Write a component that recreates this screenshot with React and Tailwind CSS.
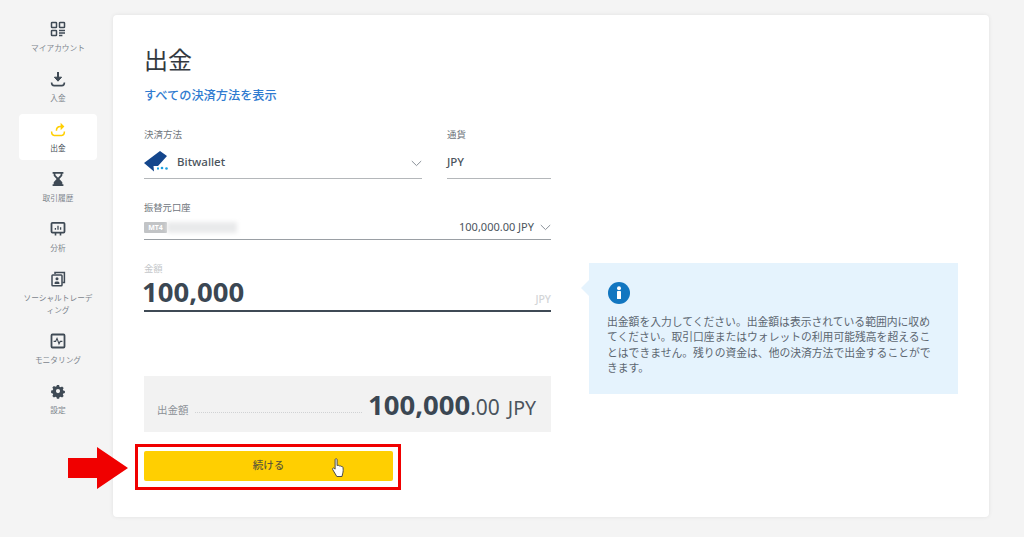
const font = "font-['Noto_Sans','Noto_Sans_CJK_JP',sans-serif]";

function NavIcon({ name, className }) {
  const common = { width: 18, height: 18, viewBox: "0 0 18 18", className };
  if (name === "account")
    return (
      <svg {...common} fill="none" stroke="currentColor" strokeWidth="1.5">
        <rect x="2.5" y="2.5" width="5" height="5" rx="0.6" />
        <rect x="2.5" y="10.5" width="5" height="5" rx="0.6" />
        <rect x="10.5" y="2.5" width="5" height="5" rx="0.6" />
        <path d="M10 10.5h6M10 13h6M10 15.500h3.400" />
      </svg>
    );
  if (name === "deposit")
    return (
      <svg {...common} fill="none" stroke="currentColor" strokeWidth="1.6">
        <path d="M9 2v8.500" strokeWidth="2" />
        <path d="M5.400 7.200h7.200L9 11.200z" fill="currentColor" strokeWidth="1" />
        <path d="M2.600 12.400c0 2.400 1 3.200 2.600 3.200h7.600c1.600 0 2.600-.8 2.600-3.200" />
      </svg>
    );
  if (name === "withdraw")
    return (
      <svg {...common} fill="none" stroke="currentColor" strokeWidth="1.5">
        <path d="M7.400 10.800c0-2.700 1.300-4.300 4-4.300h1" />
        <path d="M11.600 2.800 15.400 6.500l-3.800 3.700z" fill="currentColor" stroke="none" />
        <path d="M2.600 11.600c0 2.800 1 3.800 2.600 3.800h7.600c1.600 0 2.600-1 2.600-3.800" />
      </svg>
    );
  if (name === "history")
    return (
      <svg {...common}>
        <path d="M3.600 2h10.800v1.800h-1.100v2L10.400 9l2.900 3.200v2h1.100V16H3.600v-1.800h1.100v-2L7.600 9 4.700 5.800v-2H3.600z" fill="currentColor" />
        <path d="M6.400 3.800h5.200v1.300L9 7.800 6.400 5.100z" fill="#f4f4f4" />
      </svg>
    );
  if (name === "analysis")
    return (
      <svg {...common} fill="none" stroke="currentColor">
        <rect x="2.500" y="2.800" width="13" height="9.800" rx="1" strokeWidth="1.8" />
        <path d="M6.400 9.800V8M9 9.800V5.800M11.600 9.800V7.200" strokeWidth="1.300" />
        <path d="M6.500 12.600v3M11.500 12.600v3" strokeWidth="1.600" />
      </svg>
    );
  if (name === "social")
    return (
      <svg {...common} fill="none" stroke="currentColor" strokeWidth="1.500">
        <path d="M6 4V2.400h9.400v10.200h-2" />
        <rect x="3" y="5" width="10" height="10.800" rx="0.8" />
        <circle cx="8" cy="8.800" r="1.500" fill="currentColor" stroke="none" />
        <path d="M5.600 14v-1c0-.9 1-1.400 2.400-1.400s2.400.5 2.400 1.400v1z" fill="currentColor" stroke="none" />
      </svg>
    );
  if (name === "monitor")
    return (
      <svg {...common} fill="none" stroke="currentColor">
        <rect x="2.500" y="2.500" width="13" height="13" rx="1" strokeWidth="1.800" />
        <path d="M4.600 9.400h2l1.400-3 2 5.400 1.200-2.400h2.200" strokeWidth="1.100" />
      </svg>
    );
  return (
    <svg {...common}>
      <path
        fillRule="evenodd"
        fill="currentColor"
        d="M7.600 2h2.800l.4 2 1.500.7 1.800-1.100 2 2-1.100 1.800.6 1.400 2 .5v2.600l-2 .5-.6 1.400 1.100 1.800-2 2-1.800-1.100-1.500.7-.4 2H7.600l-.4-2-1.500-.7-1.800 1.100-2-2 1.100-1.800-.6-1.400-2-.5V8.800l2-.5.6-1.400-1.100-1.800 2-2 1.800 1.100 1.500-.7zM9 6.900a2.600 2.600 0 1 0 0 5.200 2.600 2.600 0 0 0 0-5.200z"
        transform="translate(1.800 1.500) scale(0.8)"
      />
    </svg>
  );
}

const navItems = [
  { icon: "account", label: "マイアカウント" },
  { icon: "deposit", label: "入金" },
  { icon: "withdraw", label: "出金", active: true },
  { icon: "history", label: "取引履歴" },
  { icon: "analysis", label: "分析" },
  { icon: "social", label: "ソーシャルトレーディング" },
  { icon: "monitor", label: "モニタリング" },
  { icon: "settings", label: "設定" },
];

function Sidebar() {
  return (
    <nav className="w-[113px] shrink-0 pt-[14px] pl-[19px] pr-4">
      {navItems.map((item) => (
        <div
          key={item.icon}
          className={`flex flex-col items-center pt-[6px] pb-[6px] mb-[4px] rounded-sm ${item.active ? "bg-white" : ""}`}
        >
          <NavIcon name={item.icon} className={item.active ? "text-[#ffcf01]" : "text-[#3f4a55]"} />
          <span
            className={`mt-[4px] w-[74px] text-center text-[7.7px] leading-[12px] ${item.active ? "text-[#3f4a55]" : "text-[#7d858d]"}`}
          >
            {item.label}
          </span>
        </div>
      ))}
    </nav>
  );
}

function Chevron({ className }) {
  return (
    <svg width="11" height="7" viewBox="0 0 11 7" fill="none" stroke="#8a9199" strokeWidth="1" className={className}>
      <path d="M.8 1 5.500 5.600 10.200 1" />
    </svg>
  );
}

function BitwalletLogo() {
  return (
    <svg width="26" height="22" viewBox="0 0 26 22" className="shrink-0">
      <path d="M0 12 16 0l7 5-9 10H9.500l.5 5.500z" fill="#14468c" />
      <path d="M13 17.500h2" stroke="#1c9fe0" strokeWidth="2" />
      <circle cx="18" cy="17" r="1.300" fill="#1c9fe0" />
      <circle cx="22.500" cy="17.500" r="1.300" fill="#1c9fe0" />
    </svg>
  );
}

function PointerCursor() {
  return (
    <svg width="15" height="20" viewBox="0 0 14 20" className="absolute left-[331px] top-[458px]">
      <path
        d="M3.600 1.600c0-1.200 2-1.200 2 0v6l.6-.2c.9-.3 1.500 0 1.700.5.8-.3 1.500 0 1.700.6.9-.3 1.800.1 1.900 1 .3 2.300.3 4-.4 6.300l-.6 2.700H5.300L1.200 11.600c-.7-1 .6-2.200 1.500-1.300l.9.900z"
        fill="#fff"
        stroke="#4a4a4a"
        strokeWidth="1"
        strokeLinejoin="round"
      />
    </svg>
  );
}

function WithdrawForm() {
  return (
    <div className="w-[407px] shrink-0">
      <h1 className="text-[24px] leading-[32px] text-[#33393f] font-normal">出金</h1>
      <a className="block mt-[11px] text-[12.2px] leading-[18px] text-[#2f7bd0] font-medium">すべての決済方法を表示</a>

      <div className="flex gap-[25px] mt-[23px]">
        <div className="w-[278px]">
          <div className="text-[9.5px] leading-[14px] text-[#6f767d]">決済方法</div>
          <div className="flex items-center h-[34px] mt-[3px] border-b border-[#b4b7ba]">
            <BitwalletLogo />
            <span className="ml-[7px] text-[11.5px] font-medium text-[#4b545d]">Bitwallet</span>
            <Chevron className="ml-auto mt-[3px]" />
          </div>
        </div>
        <div className="flex-1">
          <div className="text-[9.5px] leading-[14px] text-[#6f767d]">通貨</div>
          <div className="flex items-center h-[34px] mt-[3px] border-b border-[#b4b7ba] text-[11.5px] font-medium text-[#4b545d]">
            JPY
          </div>
        </div>
      </div>

      <div className="mt-[22px]">
        <div className="text-[9.3px] leading-[14px] text-[#6f767d]">振替元口座</div>
        <div className="flex items-center h-[25px] border-b border-[#9a9fa4]">
          <span className="w-[23px] h-[11px] text-center leading-[11px] text-[7px] font-bold text-white bg-[#c2c4c6] rounded-[1px]">MT4</span>
          <span className="w-[70px] h-[11px] bg-[#e9eaeb] blur-[2px]"></span>
          <span className="ml-auto text-[11px] text-[#4b545d]">100,000.00 JPY</span>
          <Chevron className="ml-[6px]" />
        </div>
      </div>

      <div className="mt-[22px]">
        <div className="text-[9.3px] leading-[14px] text-[#c4c7ca]">金額</div>
        <div className="flex items-end justify-between h-[36px] border-b-2 border-[#3f4a55]">
          <span className="-ml-[2px] text-[27.5px] leading-[36px] font-bold text-[#3b4753]">100,000</span>
          <span className="text-[10.5px] leading-[22px] font-medium text-[#d3d5d7]">JPY</span>
        </div>
      </div>

      <div className="flex items-end h-[56px] mt-[64px] pl-[13px] pr-[15px] pb-[8px] bg-[#f2f2f2]">
        <span className="mb-[7px] text-[10.5px] leading-[14px] text-[#8b9096]">出金額</span>
        <span className="flex-1 mx-[6px] mb-[11px] border-b border-dotted border-[#d0d2d4]"></span>
        <span className="text-[#3b4753] leading-[32px] text-[19.5px]">
          <span className="text-[27.5px] font-bold">100,000</span>
          <span className="text-[21px] text-[#4b545d]">.00</span>
          <span className="ml-[8px] text-[#4b545d]">JPY</span>
        </span>
      </div>

      <button className="block w-[249px] h-[30px] mt-[19px] bg-[#ffcf01] rounded-[2px] text-[10.5px] font-medium text-[#5f5a36]">
        続ける
      </button>
    </div>
  );
}

function InfoBox() {
  return (
    <div className="relative w-[369px] h-[131px] mt-[219px] ml-[38px] px-[19px] pt-[19px] bg-[#e5f3fd]">
      <span className="absolute -left-[8px] top-[17px] w-0 h-0 border-y-[8px] border-y-transparent border-r-[8px] border-r-[#e5f3fd]"></span>
      <svg width="22" height="22" viewBox="0 0 22 22" className="block">
        <circle cx="11" cy="11" r="11" fill="#1276c0" />
        <rect x="9" y="9" width="4" height="8" rx="0.6" fill="#fff" />
        <circle cx="11" cy="6.2" r="2" fill="#fff" />
      </svg>
      <p className="mt-[10px] -ml-px text-[10.8px] leading-[15.3px] text-[#5c6670] w-[331px] break-all">
        出金額を入力してください。出金額は表示されている範囲内に収めてください。取引口座またはウォレットの利用可能残高を超えることはできません。残りの資金は、他の決済方法で出金することができます。
      </p>
    </div>
  );
}

export default function App() {
  return (
    <div className={`relative flex w-[1024px] h-[537px] overflow-hidden bg-[#f4f4f4] ${font}`}>
      <Sidebar />
      <main className="flex w-[876px] h-[502px] mt-[15px] pl-[31px] pt-[29px] bg-white rounded-sm shadow-[0_0_4px_rgba(0,0,0,0.08)]">
        <WithdrawForm />
        <InfoBox />
      </main>

      {/* annotation over the screenshot */}
      <div className="absolute left-[135px] top-[444px] w-[266px] h-[46px] border-[3px] border-[#f00000]"></div>
      <svg width="60" height="42" viewBox="0 0 60 42" className="absolute left-[68px] top-[447px]">
        <path d="M0 11h29V0l31 21-31 21V31H0z" fill="#f00000" />
      </svg>
      <PointerCursor />
    </div>
  );
}
